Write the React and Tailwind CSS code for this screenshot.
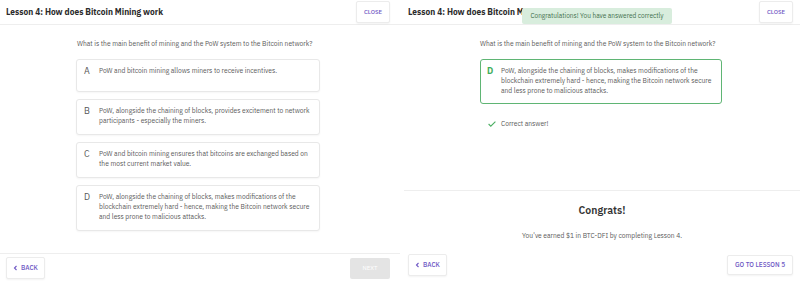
import React from "react";

const font = { fontFamily: '"IBM Plex Sans", "Noto Sans", "Liberation Sans", sans-serif' };

function Header({ pl, pr }) {
  return (
    <div className={`relative flex h-[25px] items-center justify-between border-b border-[#eeeeee] ${pl} ${pr}`}>
      <div className="text-[8.4px] font-bold text-[#2b2b2b]">Lesson 4: How does Bitcoin Mining work</div>
      <button className="flex h-[22px] w-[34px] items-center justify-center rounded-[2px] border border-[#ececec] bg-white text-[6px] font-medium text-[#6e57c4] shadow-[0_1px_2px_rgba(0,0,0,0.05)]">
        CLOSE
      </button>
    </div>
  );
}

function Option({ letter, children, h }) {
  return (
    <div className={`flex rounded-[3px] border border-[#e8e8e8] bg-white pl-[7px] pr-[8px] pt-[6px] pb-[8px] shadow-[0_1px_2px_rgba(0,0,0,0.04)] ${h || ""}`}>
      <div className="w-[15px] shrink-0 text-[9px] leading-[10px] text-[#555]">{letter}</div>
      <div className="text-[6.7px] leading-[10px] text-[#5a5a5a]">{children}</div>
    </div>
  );
}

function BackBtn() {
  return (
    <button className="flex h-[22px] w-[39px] items-center justify-center gap-[3px] rounded-[2px] border border-[#ececec] bg-white text-[6.5px] font-medium text-[#6e57c4] shadow-[0_1px_2px_rgba(0,0,0,0.05)]">
      <svg width="5" height="6" viewBox="0 0 5 6" fill="none"><path d="M3.5 1 L1.5 3 L3.5 5" stroke="#6e57c4" strokeWidth="1.1" /></svg>
      BACK
    </button>
  );
}

export default function App() {
  return (
    <div className="flex h-[287px] w-[800px] overflow-hidden bg-white" style={font}>
      {/* Left panel */}
      <div className="flex h-full w-[400px] flex-col">
        <Header pl="pl-[6px]" pr="pr-[10px]" />
        <div className="flex-1 pl-[76px] pt-[14px]">
          <div className="w-[244px]">
            <div className="ml-[1px] text-[6.7px] leading-[10px] text-[#5a5a5a]">
              What is the main benefit of mining and the PoW system to the Bitcoin network?
            </div>
            <div className="mt-[10px] flex flex-col gap-[7px]">
              <Option letter="A" h="h-[33px]">PoW and bitcoin mining allows miners to receive incentives.</Option>
              <Option letter="B">PoW, alongside the chaining of blocks, provides excitement to network participants - especially the miners.</Option>
              <Option letter="C">PoW and bitcoin mining ensures that bitcoins are exchanged based on the most current market value.</Option>
              <Option letter="D">PoW, alongside the chaining of blocks, makes modifications of the blockchain extremely hard - hence, making the Bitcoin network secure and less prone to malicious attacks.</Option>
            </div>
          </div>
        </div>
        <div className="flex h-[34px] items-start justify-between border-t border-[#eeeeee] pl-[6px] pr-[10px] pt-[3px]">
          <BackBtn />
          <button className="mt-[1px] h-[21px] w-[40px] rounded-[2px] bg-[#e4e4e4] text-[6px] text-white">NEXT</button>
        </div>
      </div>

      {/* Right panel */}
      <div className="relative flex h-full w-[400px] flex-col">
        <Header pl="pl-[8px]" pr="pr-[7px]" />
        <div className="absolute left-[122px] top-[8px] flex h-[16px] w-[150px] items-center justify-center rounded-[2px] bg-[#d8eddd] text-[6.5px] text-[#3f6f4c]">
          Congratulations! You have answered correctly
        </div>
        <div className="h-[165px] pl-[80px] pt-[14px]">
          <div className="w-[242px]">
            <div className="text-[6.7px] leading-[10px] text-[#5a5a5a]">
              What is the main benefit of mining and the PoW system to the Bitcoin network?
            </div>
            <div className="mt-[10px] flex rounded-[3px] border-[1.5px] border-[#5fb574] bg-white pl-[6px] pr-[8px] pt-[6px] pb-[7px]">
              <div className="w-[14px] shrink-0 text-[9px] font-bold leading-[10px] text-[#3fae5b]">D</div>
              <div className="text-[6.7px] leading-[10px] text-[#5a5a5a]">
                PoW, alongside the chaining of blocks, makes modifications of the blockchain extremely hard - hence, making the Bitcoin network secure and less prone to malicious attacks.
              </div>
            </div>
            <div className="mt-[15px] flex items-center gap-[5px] pl-[8px]">
              <svg width="8" height="6" viewBox="0 0 8 6" fill="none"><path d="M0.6 3 L2.8 5.2 L7.4 0.6" stroke="#4caf63" strokeWidth="1.1" /></svg>
              <span className="text-[6.7px] text-[#5a5a5a]">Correct answer!</span>
            </div>
          </div>
        </div>
        <div className="ml-[4px] border-t border-[#eeeeee] pt-[11px] text-center">
          <div className="text-[10.5px] font-semibold leading-[16px] text-[#333]">Congrats!</div>
          <div className="mt-[13px] text-[6.7px] text-[#5a5a5a]">You've earned $1 in BTC-DFI by completing Lesson 4.</div>
        </div>
        <div className="mt-auto flex h-[35px] items-start justify-between pl-[8px] pr-[7px] pt-[2px]">
          <BackBtn />
          <button className="mt-[1px] flex h-[20px] w-[66px] items-center justify-center rounded-[2px] border border-[#ececec] bg-white text-[6.5px] font-medium text-[#6e57c4] shadow-[0_1px_2px_rgba(0,0,0,0.05)]">
            GO TO LESSON 5
          </button>
        </div>
      </div>
    </div>
  );
}
